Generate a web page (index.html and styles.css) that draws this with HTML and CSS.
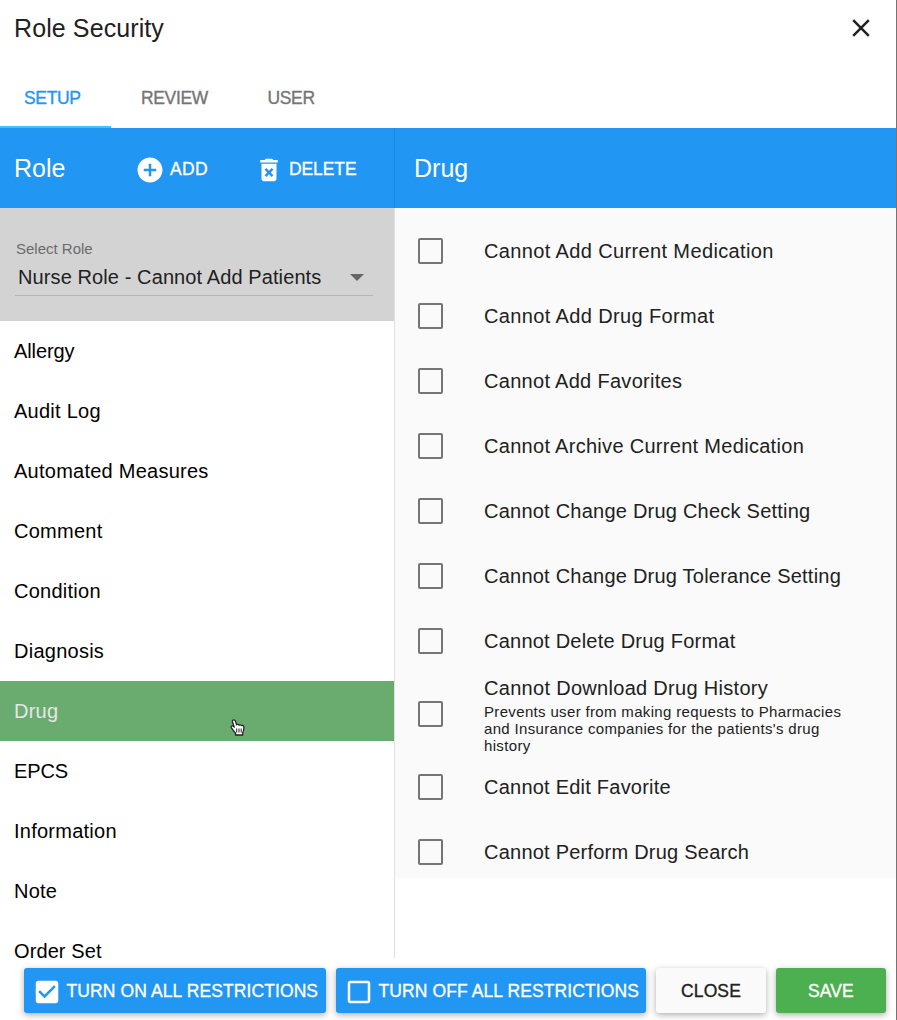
FILE: index.html
```html
<!DOCTYPE html>
<html lang="en">
<head>
<meta charset="utf-8">
<title>Role Security</title>
<link rel="stylesheet" href="styles.css">
</head>
<body>
<div class="dialog">
  <header class="titlebar">
    <h1 class="title">Role Security</h1>
    <button class="dismiss" aria-label="Dismiss"><svg width="20" height="20" viewBox="0 0 20 20"><path d="M2.200 2.200 17.800 17.800M17.800 2.200 2.200 17.800" fill="none" stroke="#202124" stroke-width="2.500"/></svg></button>
  </header>
  <nav class="tabs">
    <a class="tab active">SETUP</a>
    <a class="tab tab-review">REVIEW</a>
    <a class="tab tab-user">USER</a>
  </nav>
  <main class="panes">
    <section class="roles">
      <div class="toolbar">
        <h2 class="heading role-heading">Role</h2>
        <button class="action add"><svg width="30" height="30" viewBox="0 0 24 24"><path fill="#fff" d="M12 2C6.480 2 2 6.480 2 12s4.480 10 10 10 10-4.480 10-10S17.520 2 12 2zm5 11h-4v4h-2v-4H7v-2h4V7h2v4h4v2z"/></svg><span>ADD</span></button>
        <button class="action delete"><svg width="30" height="30" viewBox="0 0 24 24"><path fill="#fff" d="M6 19c0 1.100.9 2 2 2h8c1.100 0 2-.9 2-2V7H6v12zm2.460-7.120 1.410-1.410L12 12.590l2.120-2.120 1.410 1.410L13.410 14l2.120 2.120-1.410 1.410L12 15.410l-2.120 2.120-1.410-1.410L10.590 14l-2.130-2.120zM15.500 4l-1-1h-5l-1 1H5v2h14V4z"/></svg><span>DELETE</span></button>
      </div>
      <div class="picker">
        <div class="picker-label">Select Role</div>
        <div class="picker-field"><span>Nurse Role - Cannot Add Patients</span><i class="caret"></i></div>
      </div>
      <ul class="menu">
        <li class="tight">Allergy</li><li>Audit Log</li><li>Automated Measures</li><li>Comment</li><li>Condition</li><li>Diagnosis</li>
        <li class="selected">Drug
          <svg class="pointer" width="18" height="20" viewBox="0 0 18 20"><path d="M5.200 2C6.600 1.500 7.300 2.500 7.600 3.600l1 3.200c.9-.7 2-.5 2.500.3.900-.6 2-.3 2.500.5 1-.4 2.200.1 2.300 1.300.1 2.300-.2 4-1.200 5.800V17H7.500v-1.800c-1.700-1.900-2.700-3.300-4.200-5.600-.8-1.400 1-2.300 2-1.300l1 .8L4.500 4C4.200 3 4.400 2.300 5.200 2z" fill="#fff" stroke="#222" stroke-width="1.300" stroke-linejoin="round"/><path d="M8.700 10.500v4M11 10.500v4M13.200 10.500v4" stroke="#222" stroke-width="1"/></svg>
        </li>
        <li class="tight">EPCS</li><li>Information</li><li>Note</li><li class="last">Order Set</li>
      </ul>
    </section>
    <section class="permissions">
      <div class="toolbar"><h2 class="heading">Drug</h2></div>
      <div class="options">
        <label class="option wide"><i class="box"></i><span>Cannot Add Current Medication</span></label>
        <label class="option wide"><i class="box"></i><span>Cannot Add Drug Format</span></label>
        <label class="option medium"><i class="box"></i><span>Cannot Add Favorites</span></label>
        <label class="option medium"><i class="box"></i><span>Cannot Archive Current Medication</span></label>
        <label class="option"><i class="box"></i><span>Cannot Change Drug Check Setting</span></label>
        <label class="option"><i class="box"></i><span>Cannot Change Drug Tolerance Setting</span></label>
        <label class="option"><i class="box"></i><span>Cannot Delete Drug Format</span></label>
        <label class="option medium detailed"><i class="box"></i><span>Cannot Download Drug History<small>Prevents user from making requests to Pharmacies<br>and Insurance companies for the patients's drug<br>history</small></span></label>
        <label class="option"><i class="box"></i><span>Cannot Edit Favorite</span></label>
        <label class="option"><i class="box"></i><span>Cannot Perform Drug Search</span></label>
      </div>
    </section>
  </main>
  <footer class="footer">
    <button class="btn all-on"><svg width="30" height="30" viewBox="0 0 24 24"><path fill="#fff" d="M19 3H5c-1.110 0-2 .9-2 2v14c0 1.100.89 2 2 2h14c1.110 0 2-.9 2-2V5c0-1.100-.89-2-2-2zm-9 14-5-5 1.410-1.410L10 14.170l7.590-7.590L19 8l-9 9z"/></svg><span>TURN ON ALL RESTRICTIONS</span></button>
    <button class="btn all-off"><svg width="30" height="30" viewBox="0 0 24 24"><path fill="#fff" d="M19 5v14H5V5h14m0-2H5c-1.100 0-2 .9-2 2v14c0 1.100.9 2 2 2h14c1.100 0 2-.9 2-2V5c0-1.100-.9-2-2-2z"/></svg><span>TURN OFF ALL RESTRICTIONS</span></button>
    <button class="btn close"><span>CLOSE</span></button>
    <button class="btn save"><span>SAVE</span></button>
  </footer>
</div>
</body>
</html>
```
FILE: styles.css
```css
* { box-sizing: border-box; }
body { margin: 0; font-family: "Liberation Sans", Arial, sans-serif; color: #212121; background: #fff; }
button { border: 0; margin: 0; padding: 0; background: none; font: inherit; color: inherit; }
h1, h2 { margin: 0; font-weight: 400; }
svg { display: block; flex: none; }
.dialog { width: 897px; height: 1020px; border-right: 1px solid #747474; display: flex; flex-direction: column; overflow: hidden; }
.titlebar { height: 68px; padding: 0 25px 12px 14px; display: flex; align-items: center; justify-content: space-between; }
.title { font-size: 25px; line-height: 30px; letter-spacing: .1px; }
.tabs { height: 60px; display: flex; font-size: 17.5px; color: #757575; letter-spacing: -.35px; -webkit-text-stroke: .35px; }
.tab { height: 60px; line-height: 60px; padding: 0 30px; }
.tab.active { width: 111px; padding-left: 24px; color: #2196f3; border-bottom: 2px solid #40c4ff; }
.tab-review { width: 126.5px; }
.panes { display: grid; grid-template-columns: 394px 1fr; height: 830px; overflow: hidden; }
.roles { height: 830px; overflow: hidden; }
.permissions { box-shadow: inset 1px 0 #e0e0e0; }
.toolbar { height: 80px; background: #2196f3; color: #fff; display: flex; align-items: center; padding: 0 0 0 14px; }
.permissions .toolbar { padding-left: 20px; box-shadow: inset 1px 0 #1e88dc; }
.heading { font-size: 25px; line-height: 30px; }
.role-heading { width: 121px; }
.action { display: flex; align-items: center; gap: 5px; padding-top: 2px; font-size: 17.5px; -webkit-text-stroke: .35px; }
.action svg { position: relative; top: .5px; }
.add { width: 119px; letter-spacing: .3px; }
.delete { letter-spacing: -.1px; }
.picker { height: 113px; background: #d3d3d3; padding: 31px 21px 0 15px; }
.picker-label { padding-left: 1px; font-size: 15px; line-height: 20px; color: #6b6b6b; }
.picker-field { height: 37px; border-bottom: 1px solid #b5b5b5; padding: 1px 9px 0 3px; display: flex; align-items: center; justify-content: space-between; font-size: 20px; letter-spacing: .1px; }
.caret { border: 7px solid transparent; border-top: 7px solid #666; border-bottom: 0; }
.menu { margin: 0; padding: 0; list-style: none; color: #000; font-size: 20px; letter-spacing: .25px; }
.menu li { height: 60px; line-height: 60px; padding-left: 14px; position: relative; }
.menu .tight { letter-spacing: -.1px; }
.menu .last { height: 37px; padding-top: 23px; line-height: 14px; letter-spacing: .1px; }
.menu .selected { background: #6aab70; color: #e6e6e6; }
.pointer { position: absolute; left: 228px; top: 36.5px; }
.options { height: 670px; padding: 10px 0 0 23.5px; background: #fafafa; box-shadow: inset 1px 0 #e0e0e0; overflow: hidden; }
.option { height: 65px; display: grid; grid-template-columns: 66.5px 1fr; align-items: center; font-size: 20px; line-height: 24px; letter-spacing: .23px; }
.option.wide { letter-spacing: .37px; }
.option.medium { letter-spacing: .3px; }
.box { display: block; width: 25px; height: 26px; margin-top: 1px; border: 2px solid #757575; border-radius: 2px; }
.detailed { height: 81px; }
.detailed span { padding-top: 3px; }
.detailed .box { margin-top: 0; }
.option small { display: block; font-size: 15px; line-height: 17px; padding-top: 3px; letter-spacing: .34px; }
.footer { height: 62px; padding: 10px 10px 0 24px; display: flex; gap: 10px; font-size: 17.5px; }
.btn { height: 45px; border-radius: 3px; display: flex; align-items: center; justify-content: center; padding-top: 2px; color: #fff; background: #2196f3; box-shadow: 0 2px 6px rgba(0,0,0,.32); letter-spacing: .1px; -webkit-text-stroke: .35px; white-space: nowrap; }
.btn svg { margin-right: 5px; }
.all-on, .all-off { justify-content: flex-start; padding-left: 7.5px; }
.all-on { width: 302px; }
.all-off { width: 310px; }
.close, .save { width: 110px; }
.close { background: #fafafa; color: #212121; }
.save { background: #4caf50; }
```
